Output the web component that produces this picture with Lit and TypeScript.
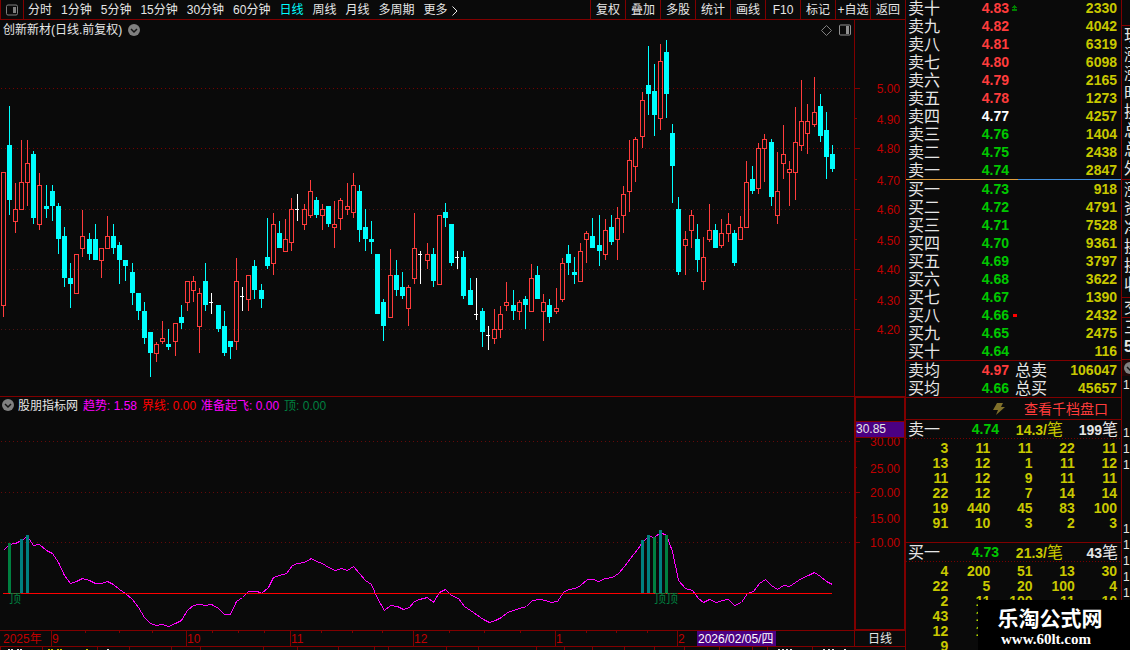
import { LitElement, html, svg, css } from "lit";
import { customElement, property } from "lit/decorators.js";

const PLOT_WIDTH = 854;
const pct = (x: number) => `${(x / PLOT_WIDTH) * 100}%`;

type Kind = "r" | "c" | "w";
// kind, centre, high, body top, body bottom, low
type Candle = [Kind, number, number, number, number, number];

const CANDLES: Candle[] = [
  ["r", 3, 172, 172, 306, 317], ["c", 9, 106, 145, 200, 215], ["r", 15, 183, 209, 222, 233],
  ["r", 21, 140, 182, 210, 210], ["r", 27, 140, 163, 183, 206], ["c", 33, 151, 154, 218, 224],
  ["r", 39, 173, 185, 225, 230], ["c", 46, 185, 206, 209, 218], ["c", 52, 185, 191, 206, 221],
  ["c", 58, 203, 206, 239, 254], ["c", 64, 227, 236, 278, 287], ["c", 70, 263, 278, 284, 308],
  ["r", 76, 254, 254, 294, 294], ["r", 82, 210, 236, 249, 257], ["c", 89, 233, 239, 254, 260],
  ["c", 95, 224, 239, 260, 260], ["r", 101, 248, 248, 261, 278], ["r", 107, 216, 236, 249, 249],
  ["c", 113, 224, 236, 248, 254], ["c", 119, 242, 245, 260, 284], ["c", 125, 260, 260, 266, 281],
  ["c", 132, 263, 272, 293, 305], ["c", 138, 293, 293, 311, 320], ["c", 144, 302, 311, 338, 344],
  ["c", 150, 332, 332, 353, 377], ["r", 156, 342, 344, 354, 362], ["r", 162, 321, 338, 342, 344],
  ["c", 168, 329, 344, 347, 350], ["r", 175, 323, 323, 342, 356], ["c", 181, 305, 317, 323, 329],
  ["r", 187, 281, 281, 303, 311], ["r", 193, 276, 281, 291, 302], ["r", 199, 288, 293, 327, 353],
  ["c", 205, 263, 281, 305, 311], ["w", 211, 293, 302, 303, 314], ["c", 218, 305, 305, 329, 332],
  ["c", 224, 311, 326, 353, 356], ["c", 230, 341, 341, 347, 359], ["r", 236, 258, 281, 342, 350],
  ["w", 242, 287, 296, 297, 311], ["r", 248, 275, 275, 300, 311], ["c", 254, 260, 266, 290, 299],
  ["c", 261, 284, 290, 299, 308], ["c", 267, 218, 257, 266, 269], ["r", 273, 213, 224, 264, 275],
  ["c", 279, 221, 233, 248, 248], ["r", 285, 219, 239, 252, 252], ["r", 291, 198, 209, 243, 251],
  ["w", 297, 194, 209, 210, 221], ["r", 304, 204, 209, 225, 230], ["r", 310, 180, 191, 216, 218],
  ["c", 316, 197, 200, 215, 218], ["r", 322, 204, 209, 216, 230], ["c", 328, 206, 206, 224, 227],
  ["r", 334, 201, 224, 228, 248], ["r", 340, 198, 200, 219, 230], ["r", 347, 183, 206, 210, 215],
  ["r", 353, 173, 185, 213, 218], ["c", 359, 185, 191, 230, 242], ["c", 365, 209, 227, 239, 251],
  ["c", 371, 221, 239, 242, 254], ["c", 377, 254, 254, 314, 314], ["c", 383, 299, 302, 326, 341],
  ["r", 390, 249, 275, 318, 318], ["c", 396, 260, 275, 290, 296], ["c", 402, 272, 287, 296, 299],
  ["r", 408, 285, 287, 309, 326], ["r", 414, 213, 248, 279, 284], ["w", 420, 251, 254, 255, 284],
  ["r", 427, 243, 254, 261, 269], ["c", 433, 248, 254, 281, 287], ["r", 439, 215, 215, 285, 285],
  ["c", 445, 203, 212, 218, 227], ["c", 451, 224, 224, 263, 266], ["w", 457, 251, 257, 258, 269],
  ["c", 463, 251, 257, 296, 299], ["c", 470, 278, 290, 305, 305], ["w", 476, 278, 314, 315, 320],
  ["c", 482, 308, 311, 332, 347], ["w", 488, 326, 335, 336, 350], ["r", 494, 309, 329, 339, 344],
  ["r", 500, 306, 314, 330, 338], ["r", 506, 282, 302, 306, 311], ["c", 513, 290, 305, 311, 320],
  ["r", 519, 300, 302, 312, 320], ["c", 525, 296, 299, 305, 329], ["r", 531, 264, 278, 312, 312],
  ["c", 537, 266, 275, 299, 299], ["r", 543, 294, 302, 312, 341], ["c", 549, 299, 305, 317, 323],
  ["r", 556, 288, 308, 312, 314], ["r", 562, 258, 263, 300, 302], ["c", 568, 245, 254, 263, 275],
  ["c", 574, 257, 272, 275, 284], ["r", 580, 243, 251, 282, 282], ["r", 586, 231, 233, 240, 263],
  ["c", 592, 218, 236, 248, 248], ["c", 599, 215, 245, 251, 266], ["r", 605, 219, 230, 255, 260],
  ["c", 611, 215, 227, 242, 245], ["r", 617, 207, 218, 240, 260], ["r", 623, 186, 194, 216, 233],
  ["r", 629, 140, 160, 192, 212], ["r", 635, 137, 139, 167, 182], ["r", 642, 92, 100, 137, 148],
  ["c", 648, 46, 85, 94, 115], ["c", 654, 64, 91, 115, 136], ["r", 660, 44, 61, 119, 130],
  ["c", 666, 40, 52, 94, 118], ["c", 672, 124, 133, 166, 203], ["c", 678, 197, 209, 272, 275],
  ["r", 685, 231, 239, 246, 275], ["r", 691, 210, 215, 231, 248], ["c", 697, 224, 239, 260, 272],
  ["r", 703, 237, 257, 282, 290], ["r", 709, 204, 230, 240, 242], ["c", 715, 224, 230, 248, 248],
  ["r", 721, 219, 233, 246, 248], ["r", 728, 213, 224, 234, 242], ["c", 734, 230, 233, 263, 266],
  ["r", 740, 216, 227, 240, 240], ["r", 746, 161, 182, 228, 228], ["c", 752, 166, 179, 191, 194],
  ["r", 758, 143, 148, 189, 194], ["r", 764, 134, 139, 149, 182], ["c", 771, 139, 142, 197, 206],
  ["r", 777, 152, 191, 216, 224], ["r", 783, 125, 154, 164, 179], ["r", 789, 161, 169, 173, 206],
  ["r", 795, 107, 142, 173, 200], ["r", 801, 80, 121, 146, 151], ["r", 807, 104, 121, 134, 154],
  ["r", 814, 77, 112, 125, 127], ["c", 820, 94, 106, 136, 142], ["c", 826, 112, 130, 157, 179],
  ["c", 832, 145, 154, 169, 172],
];

const TREND =
  "3,550 9,544 15,543 21,540 27,536 33,545 39,544 46,550 52,553 58,562 64,575 70,583 76,581 82,578 89,580 95,583 101,583 107,581 113,584 119,589 125,593 132,599 138,607 144,617 150,623 156,625 162,624 168,626 175,623 181,620 187,610 193,605 199,604 205,605 211,604 218,608 224,614 230,614 236,601 242,597 248,591 257,591 261,593 268,587 273,577 279,575 286,573 292,565 297,563 304,562 311,558 316,561 322,563 328,567 335,570 341,568 347,570 353,566 359,573 365,580 371,584 377,598 384,610 390,605 397,606 403,609 409,607 414,601 419,599 427,597 433,602 439,592 445,589 451,595 458,598 464,606 470,610 483,619 489,622 495,620 501,617 507,612 513,610 519,608 526,606 532,600 540,599 545,600 551,602 557,601 563,592 568,589 575,588 580,585 587,579 593,579 598,581 605,578 612,577 618,573 624,566 630,558 637,549 642,542 648,536 654,537 660,532 666,535 672,551 678,580 685,588 692,590 698,598 703,602 709,599 716,602 722,600 728,599 734,605 741,602 747,593 753,591 759,583 765,579 771,585 777,589 783,585 789,586 795,582 801,578 808,575 814,572 820,576 826,581 832,584";

const SIGNAL_BARS: [number, number, string][] = [
  [8, 543, "#008040"], [20, 539, "#008080"], [26, 535, "#008080"],
  [641, 540, "#008080"], [647, 535, "#008080"], [653, 537, "#008040"],
  [659, 530, "#008080"], [665, 535, "#008040"],
];

const ASKS: [string, string, string, string][] = [
  ["卖十", "4.83", "2330", "up"], ["卖九", "4.82", "4042", "up"], ["卖八", "4.81", "6319", "up"],
  ["卖七", "4.80", "6098", "up"], ["卖六", "4.79", "2165", "up"], ["卖五", "4.78", "1273", "up"],
  ["卖四", "4.77", "4257", "flat"], ["卖三", "4.76", "1404", "down"], ["卖二", "4.75", "2438", "down"],
  ["卖一", "4.74", "2847", "down"],
];
const BIDS: [string, string, string, string][] = [
  ["买一", "4.73", "918", "down"], ["买二", "4.72", "4791", "down"], ["买三", "4.71", "7528", "down"],
  ["买四", "4.70", "9361", "down"], ["买五", "4.69", "3797", "down"], ["买六", "4.68", "3622", "down"],
  ["买七", "4.67", "1390", "down"], ["买八", "4.66", "2432", "down"], ["买九", "4.65", "2475", "down"],
  ["买十", "4.64", "116", "down"],
];
const ASK_QUEUE = [
  [3, 11, 11, 22, 11], [13, 12, 1, 11, 12], [11, 12, 9, 11, 11],
  [22, 12, 7, 14, 14], [19, 440, 45, 83, 100], [91, 10, 3, 2, 3],
];
const BID_QUEUE: (number | string)[][] = [
  [4, 200, 51, 13, 30], [22, 5, 20, 100, 4], [2, 11, 100, 11, 10],
  [43, 11, "", "", ""], [12, 11, "", "", ""], [9, "", "", "", ""],
];

const base = css`
  :host {
    font-family: "Liberation Sans", "Noto Sans CJK SC", sans-serif;
    font-size: 12px;
    color: #e6e6e6;
  }
  button {
    font: inherit;
    color: inherit;
    background: none;
    border: 0;
    padding: 0;
    white-space: nowrap;
    cursor: pointer;
  }
  svg {
    display: block;
  }
  .crisp {
    shape-rendering: crispEdges;
  }
`;

const roundToggle = html`<svg width="12" height="12" viewBox="0 0 12 12">
  <circle cx="6" cy="6" r="6" fill="#808080" />
  <path d="M3 5l3 3 3-3" fill="none" stroke="#141414" stroke-width="1.5" />
</svg>`;

@customElement("period-bar")
export class PeriodBar extends LitElement {
  static styles = [
    base,
    css`
      :host {
        display: flex;
        height: 19px;
        border-bottom: 1px solid #800000;
        line-height: 17px;
      }
      .layout {
        width: 24px;
        box-sizing: border-box;
        border-left: 1px solid #800000;
        border-right: 1px solid #800000;
        display: grid;
        place-items: center;
      }
      .periods {
        display: flex;
        gap: 9px;
        padding-left: 4px;
        flex: 1;
      }
      .periods button,
      .tool {
        padding-top: 2px;
      }
      .periods .active {
        color: #00ffff;
      }
      .more {
        display: flex;
        align-items: center;
        gap: 4px;
      }
      .tools {
        display: flex;
      }
      .tool {
        width: 35px;
        box-sizing: border-box;
        border-left: 1px solid #800000;
        display: flex;
        justify-content: center;
      }
    `,
  ];
  render() {
    const periods = ["分时", "1分钟", "5分钟", "15分钟", "30分钟", "60分钟", "日线", "周线", "月线", "多周期"];
    const tools = ["复权", "叠加", "多股", "统计", "画线", "F10", "标记", "+自选", "返回"];
    return html`
      <button class="layout" aria-label="布局">
        <svg width="12" height="12" viewBox="0 0 12 12">
          <rect x="0.5" y="1" width="11" height="10" rx="1.5" fill="none" stroke="#808080" />
          <rect x="7" y="3" width="3" height="6" fill="#808080" />
        </svg>
      </button>
      <div class="periods">
        ${periods.map((p) => html`<button class=${p === "日线" ? "active" : ""}>${p}</button>`)}
        <button class="more">
          更多
          <svg width="6" height="10" viewBox="0 0 6 10">
            <path d="M0.5 0.5L5 5L0.5 9.5" fill="none" stroke="#e6e6e6" />
          </svg>
        </button>
      </div>
      <div class="tools">${tools.map((t) => html`<button class="tool">${t}</button>`)}</div>
    `;
  }
}

@customElement("price-pane")
export class PricePane extends LitElement {
  static styles = [
    base,
    css`
      :host {
        display: grid;
        grid-template-columns: minmax(0, 1fr) 51px;
        border-bottom: 1px solid #800000;
      }
      .head {
        display: flex;
        align-items: center;
        height: 20px;
        line-height: 19px;
        padding: 0 3px;
      }
      .title {
        margin-right: 6px;
      }
      .spacer {
        flex: 1;
      }
      .icons {
        display: flex;
        align-items: center;
        gap: 7px;
      }
      .scale {
        border-left: 1px solid #800000;
      }
    `,
  ];
  private candle([kind, x, hi, top, bottom, lo]: Candle) {
    if (kind === "r")
      return svg`<path fill="#ff3c3c" d="M${x} ${hi}h1V${top}h-1zM${x} ${bottom}h1V${lo}h-1z"/>
        <rect x=${x - 1.5} y=${top + 0.5} width="4" height=${bottom - top - 1} fill="none" stroke="#ff3c3c"/>`;
    const color = kind === "c" ? "#00ffff" : "#ffffff";
    return svg`<path fill=${color} d="M${x} ${hi}h1V${lo}h-1zM${x - 2} ${top}h${kind === "c" ? 5 : 4}V${bottom}H${x - 2}z"/>`;
  }
  render() {
    const grid = [88, 148, 209, 269, 329];
    const minor = [118, 179, 239, 299];
    const labels: [string, number][] = [
      ["5.00", 93], ["4.90", 124], ["4.80", 153], ["4.70", 185], ["4.60", 214],
      ["4.50", 245], ["4.40", 274], ["4.30", 305], ["4.20", 334],
    ];
    return html`
      <div>
        <div class="head">
          <span class="title">创新新材(日线.前复权)</span>
          <button aria-label="展开">${roundToggle}</button>
          <span class="spacer"></span>
          <div class="icons">
            <svg width="11" height="11" viewBox="0 0 11 11">
              <path d="M5.5 0.5l5 5-5 5-5-5z" fill="none" stroke="#808080" />
            </svg>
            <svg width="12" height="12" viewBox="0 0 12 12">
              <rect x="0.5" y="1" width="11" height="10" rx="1" fill="none" stroke="#909090" />
              <rect x="7" y="2" width="3" height="8" fill="#909090" />
            </svg>
          </div>
        </div>
        <svg class="crisp" width="100%" height="356" viewBox="0 40 854 356" preserveAspectRatio="none">
          ${grid.map((y, i) => svg`<path d="M1 ${y + 0.5}H851" stroke=${i < 2 ? "#780000" : "#501414"} stroke-dasharray="1 3"/>`)}
          ${CANDLES.map((c) => this.candle(c))}
        </svg>
      </div>
      <div class="scale">
        <svg width="50" height="376" viewBox="0 20 50 376">
          ${grid.map((y) => svg`<rect y=${y} width="5" height="1" fill="#800000"/>`)}
          ${minor.map((y) => svg`<rect y=${y} width="2" height="1" fill="#800000"/>`)}
          ${labels.map(([t, y]) => svg`<text x="45" y=${y} text-anchor="end" fill="#c00000">${t}</text>`)}
        </svg>
      </div>
    `;
  }
}

@customElement("indicator-pane")
export class IndicatorPane extends LitElement {
  static styles = [
    base,
    css`
      :host {
        display: grid;
        grid-template-columns: minmax(0, 1fr) 51px;
      }
      .head {
        display: flex;
        align-items: center;
        gap: 5px;
        height: 16px;
        line-height: 18px;
        padding-left: 2px;
      }
      .head span {
        white-space: nowrap;
        height: 16px;
      }
      .name {
        margin-left: -1px;
      }
      .trend {
        color: #ff00ff;
      }
      .limit {
        color: #ff0000;
      }
      .top {
        color: #008040;
      }
      .scale {
        border: 1px solid #800000;
        border-left-width: 2px;
      }
    `,
  ];
  render() {
    const labels: [string, number][] = [
      ["30.00", 446], ["25.00", 473], ["20.00", 497], ["15.00", 523], ["10.00", 547],
    ];
    return html`
      <div>
        <div class="head">
          <button aria-label="展开">${roundToggle}</button>
          <span class="name">股朋指标网</span>
          <span class="trend">趋势: 1.58</span>
          <span class="limit">界线: 0.00</span>
          <span class="trend">准备起飞: 0.00</span>
          <span class="top">顶: 0.00</span>
        </div>
        <svg width="100%" height="217">
          <svg class="crisp" width="100%" height="217" viewBox="0 413 854 217" preserveAspectRatio="none">
            ${[441, 492, 542].map((y) => svg`<path d="M1 ${y + 0.5}H851" stroke="#640a0a" stroke-dasharray="1 3"/>`)}
            <polyline points=${TREND} fill="none" stroke="#ff00ff" transform="translate(0.5 0.5)" />
            ${SIGNAL_BARS.map(([x, y, c]) => svg`<rect x=${x} y=${y} width="3" height=${594 - y} fill=${c}/>`)}
            <rect x="3" y="593" width="829" height="1" fill="#ff0000" />
          </svg>
          <text x=${pct(9)} y="190" fill="#008040">顶</text>
          <text x=${pct(654)} y="190" fill="#008040">顶顶</text>
        </svg>
      </div>
      <div class="scale">
        <svg width="48" height="231" viewBox="0 398 48 231">
          ${[441, 492, 542].map((y) => svg`<rect y=${y} width="4" height="1" fill="#800000"/>`)}
          ${[467, 517].map((y) => svg`<rect y=${y} width="1" height="1" fill="#800000"/>`)}
          ${labels.map(([t, y]) => svg`<text x="44" y=${y} text-anchor="end" fill="#c00000">${t}</text>`)}
          <rect x="-1" y="421.5" width="50" height="16" fill="#4b0082" stroke="#800000" />
          <text x="0" y="433" fill="#e6e6e6">30.85</text>
        </svg>
      </div>
    `;
  }
}

@customElement("time-axis")
export class TimeAxis extends LitElement {
  static styles = [
    base,
    css`
      :host {
        display: block;
        border-top: 1px solid #800000;
      }
      .row {
        display: grid;
        grid-template-columns: minmax(0, 1fr) 51px;
        height: 15px;
        border-bottom: 1px solid #800000;
      }
      .period {
        border-left: 1px solid #800000;
        text-align: center;
        line-height: 17px;
        height: 15px;
      }
    `,
  ];
  render() {
    const months: [number, string][] = [[51, "9"], [186, "10"], [290, "11"], [413, "12"], [555, "1"], [677, "2"]];
    const ticks = [85, 119, 152, 212, 238, 264, 321, 352, 382, 449, 484, 520, 586, 616, 647];
    const lower = [
      0, 42, 97, 129, 171, 200, 263, 297, 338, 374, 388, 446, 478, 536, 564, 592, 624, 654, 684, 719, 752, 767, 812,
    ];
    const marks: [number, string][] = [
      [8, "#e6e6e6"], [11, "#e6e6e6"], [17, "#e6e6e6"], [20, "#e6e6e6"],
      [48, "#c8c800"], [51, "#c8c800"], [57, "#c8c800"], [60, "#c8c800"], [86, "#c8c800"], [107, "#e6e6e6"],
      [778, "#e6e6e6"], [782, "#e6e6e6"], [786, "#e6e6e6"], [790, "#e6e6e6"],
      [823, "#e6e6e6"], [828, "#e6e6e6"], [832, "#e6e6e6"], [844, "#e6e6e6"],
    ];
    return html`
      <div class="row">
        <svg width="100%" height="15">
          <text x=${pct(3)} y="12" fill="#c00000">2025年</text>
          ${months.map(
            ([x, t]) => svg`<rect class="crisp" x=${pct(x)} width="1" height="15" fill="#800000"/>
              <text x=${pct(x + 1)} y="12" fill="#c00000">${t}</text>`
          )}
          ${ticks.map((x) => svg`<rect class="crisp" x=${pct(x)} width="1" height="2" fill="#800000"/>`)}
          <rect x=${pct(697)} width="79" height="15" fill="#4b0082" />
          <text x=${pct(698)} y="12" fill="#ffffff">2026/02/05/四</text>
        </svg>
        <div class="period">日线</div>
      </div>
      <svg class="crisp" width="100%" height="3" viewBox="0 0 905 3" preserveAspectRatio="none">
        ${lower.map((x) => svg`<rect x=${x} width="1" height="3" fill="#800000"/>`)}
        ${marks.map(([x, c]) => svg`<rect x=${x} y="2" width="2" height="1" fill=${c}/>`)}
      </svg>
    `;
  }
}

@customElement("order-book")
export class OrderBook extends LitElement {
  static styles = [
    base,
    css`
      :host {
        display: block;
        border-left: 1px solid #800000;
        border-right: 1px solid #800000;
        overflow: hidden;
        font-size: 14px;
      }
      table,
      tbody {
        display: block;
      }
      th,
      td {
        padding: 0;
        font-weight: bold;
        text-align: right;
        white-space: nowrap;
      }
      .levels tr {
        display: grid;
        grid-template-columns: 72px 29px 8px minmax(0, 1fr);
        height: 18px;
        line-height: 18px;
        padding: 0 4px 0 2px;
      }
      .asks {
        margin-top: -1px;
      }
      .averages tr {
        grid-template-columns: 72px 29px 38px minmax(0, 1fr);
      }
      th,
      .sum {
        font-weight: normal;
        font-size: 16px;
        line-height: 20px;
        height: 18px;
        text-align: left;
      }
      .sum {
        padding-left: 6px;
      }
      .up {
        color: #ff3c3c;
      }
      .flat {
        color: #ffffff;
      }
      .down {
        color: #00c800;
      }
      .qty {
        color: #c8c800;
      }
      .mark {
        display: grid;
        place-items: center end;
      }
      .divider {
        height: 1px;
        background: linear-gradient(90deg, #e0a040 52%, #4090e0 52%);
      }
      .averages {
        border-top: 1px solid #800000;
        border-bottom: 1px solid #800000;
      }
      .depth {
        display: flex;
        align-items: center;
        justify-content: flex-end;
        gap: 19px;
        height: 21px;
        padding-right: 13px;
        border-bottom: 1px solid #800000;
      }
      .depth a {
        color: #ff3c3c;
        text-decoration: none;
        line-height: 20px;
      }
      .queue-head {
        display: grid;
        grid-template-columns: 62px 29px 64px minmax(0, 1fr);
        height: 19px;
        line-height: 19px;
        padding: 0 3px 0 2px;
        font-weight: bold;
        text-align: right;
        background: repeating-linear-gradient(90deg, #780000 0 1px, transparent 1px 3px) bottom / 100% 1px no-repeat;
      }
      .side,
      .unit {
        font-size: 16px;
        font-weight: normal;
        text-align: left;
      }
      .queue {
        padding: 2px 4px 0 0;
      }
      .queue tr {
        display: grid;
        grid-template-columns: repeat(5, minmax(0, 1fr));
        height: 15px;
        line-height: 15px;
      }
      .first {
        padding-bottom: 11px;
        border-bottom: 1px solid #800000;
      }
    `,
  ];
  private level([label, price, qty, tone]: [string, string, string, string]) {
    const mark =
      label === "卖十"
        ? html`<svg class="crisp" width="5" height="6" viewBox="0 0 5 6">
            <path d="M2 0h1v1h1v1h1v1H3v1h2v2H0V4h2V3H0V2h1V1h1z" fill="#008000" />
          </svg>`
        : label === "买八"
          ? html`<svg width="4" height="4"><rect y="1" width="4" height="3" fill="#ff0000" /></svg>`
          : "";
    return html`<tr>
      <th scope="row">${label}</th>
      <td class=${tone}>${price}</td>
      <td class="mark">${mark}</td>
      <td class="qty">${qty}</td>
    </tr>`;
  }
  private queue(rows: (number | string)[][]) {
    return html`<table class="queue">
      <tbody>
        ${rows.map((r) => html`<tr>${r.map((v) => html`<td class="qty">${v}</td>`)}</tr>`)}
      </tbody>
    </table>`;
  }
  private queueHead(side: string, price: string, avg: string, count: string) {
    return html`<div class="queue-head">
      <span class="side">${side}</span>
      <span class="down">${price}</span>
      <span class="qty">${avg}/<span class="unit">笔</span></span>
      <span>${count}<span class="unit">笔</span></span>
    </div>`;
  }
  render() {
    return html`
      <table class="levels asks">
        <tbody>${ASKS.map((l) => this.level(l))}</tbody>
      </table>
      <div class="divider"></div>
      <table class="levels">
        <tbody>${BIDS.map((l) => this.level(l))}</tbody>
      </table>
      <table class="levels averages">
        <tbody>
          <tr><th scope="row">卖均</th><td class="up">4.97</td><td class="sum">总卖</td><td class="qty">106047</td></tr>
          <tr><th scope="row">买均</th><td class="down">4.66</td><td class="sum">总买</td><td class="qty">45657</td></tr>
        </tbody>
      </table>
      <div class="depth">
        <svg width="12" height="14" viewBox="0 0 12 14">
          <path d="M4 1h6L8 5h4L3 13l2-5H0z" fill="#80702a" />
        </svg>
        <a href="#depth">查看千档盘口</a>
      </div>
      <div class="first">
        ${this.queueHead("卖一", "4.74", "14.3", "199")} ${this.queue(ASK_QUEUE)}
      </div>
      ${this.queueHead("买一", "4.73", "21.3", "43")} ${this.queue(BID_QUEUE)}
    `;
  }
}

@customElement("quote-strip")
export class QuoteStrip extends LitElement {
  static styles = [
    base,
    css`
      :host {
        display: block;
        overflow: hidden;
        font-size: 16px;
      }
      .group {
        border-top: 1px solid #800000;
        padding-left: 2px;
      }
      .group div {
        height: 19px;
        line-height: 19px;
        white-space: nowrap;
      }
      .lead {
        height: 25px;
      }
      .bold {
        font-weight: bold;
      }
      .facts {
        height: 153px;
      }
      .flows {
        height: 117px;
      }
      .state {
        height: 41px;
      }
      .tab {
        height: 17px;
        padding: 2px 0 0 2px;
        box-sizing: border-box;
        background: #1e0808;
        border-top: 1px solid #800000;
      }
      .ticks {
        font-size: 12px;
        line-height: 16px;
        padding: 1px 0 0 1px;
      }
      .gap {
        height: 32px;
      }
      .late {
        height: 48px;
      }
    `,
  ];
  @property({ attribute: false }) groups: [string, string[]][] = [
    ["facts", ["现", "涨", "涨", "时", "换", "总", "总", "外"]],
    ["flows", ["涨", "资", "净", "换", "换", "收"]],
    ["trade", ["交"]],
    ["state", ["三", "5"]],
  ];
  render() {
    return html`
      <div class="lead"></div>
      ${this.groups.map(
        ([name, items]) =>
          html`<div class="group ${name}">${items.map((t) => html`<div class=${t === "5" ? "bold" : ""}>${t}</div>`)}</div>`
      )}
      <div class="tab">${roundToggle}</div>
      <div class="ticks">
        <div>1</div>
        <div class="gap"></div>
        ${[1, 1, 1].map((n) => html`<div>${n}</div>`)}
        <div class="late"></div>
        ${[1, 1, 1, 1, 1].map((n) => html`<div>${n}</div>`)}
      </div>
    `;
  }
}

@customElement("app-root")
export class AppRoot extends LitElement {
  static styles = [
    base,
    css`
      :host {
        display: grid;
        grid-template-columns: minmax(0, 1fr) 217px 8px;
        height: 100vh;
        overflow: hidden;
        position: relative;
        background: #0a0a0a;
      }
      .charts {
        min-width: 0;
      }
      .brand {
        position: absolute;
        right: 0;
        bottom: 0;
        box-sizing: border-box;
        width: 152px;
        height: 50px;
        padding: 6px 8px 0 0;
        background: #000000;
        color: #ffffff;
        font-weight: bold;
        text-align: center;
      }
      .brand-name {
        font-size: 21px;
        line-height: 26px;
      }
      .brand-url {
        font-family: "Liberation Serif", serif;
        font-size: 15px;
        line-height: 15px;
        padding-right: 8px;
      }
    `,
  ];
  render() {
    return html`
      <main class="charts">
        <period-bar></period-bar>
        <price-pane></price-pane>
        <indicator-pane></indicator-pane>
        <time-axis></time-axis>
      </main>
      <order-book></order-book>
      <quote-strip></quote-strip>
      <div class="brand">
        <div class="brand-name">乐淘公式网</div>
        <div class="brand-url">www.60lt.com</div>
      </div>
    `;
  }
}
